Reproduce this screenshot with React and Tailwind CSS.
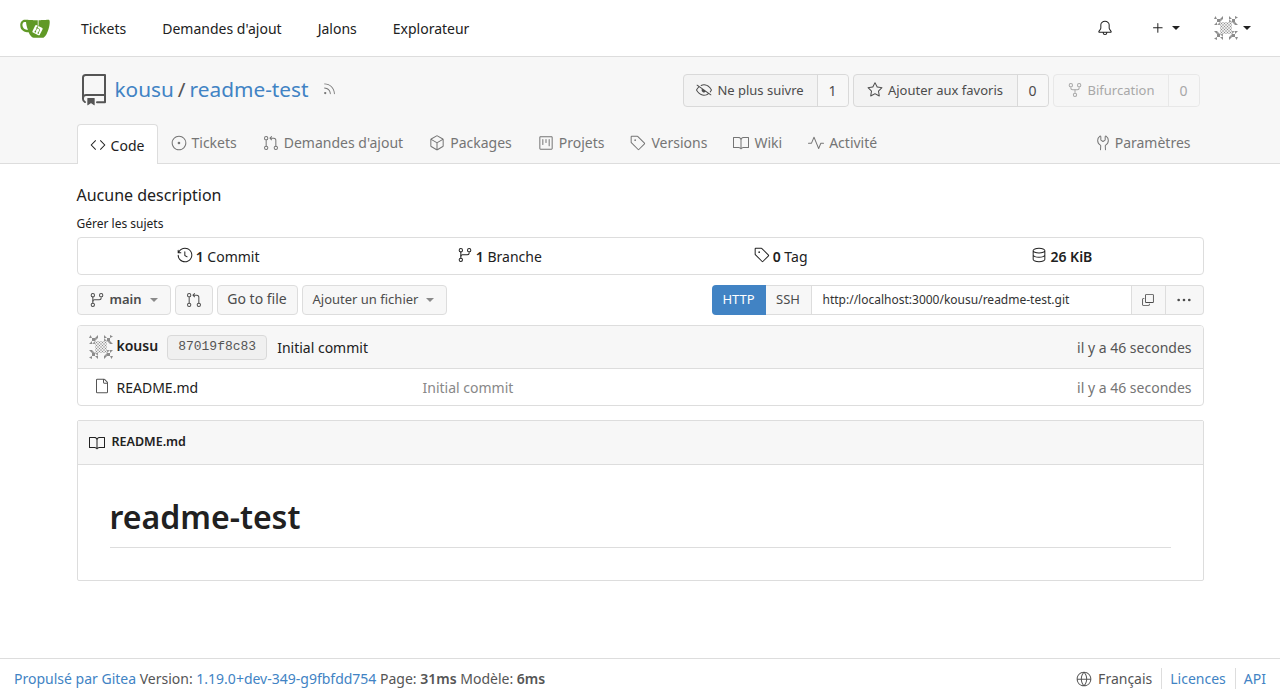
import {
  GoBell, GoBook, GoCode, GoCopy, GoDatabase, GoEyeClosed, GoFile, GoGitBranch, GoGitPullRequest,
  GoGlobe, GoHistory, GoIssueOpened, GoKebabHorizontal, GoPackage, GoPlus, GoProject, GoPulse,
  GoRepo, GoRepoForked, GoRss, GoStar, GoTag, GoTools,
} from 'react-icons/go'

const FONT = "font-['Noto_Sans',sans-serif]"

const NAV_LINKS = ['Tickets', "Demandes d'ajout", 'Jalons', 'Explorateur']

const TABS = [
  { icon: GoIssueOpened, label: 'Tickets' },
  { icon: GoGitPullRequest, label: "Demandes d'ajout" },
  { icon: GoPackage, label: 'Packages' },
  { icon: GoProject, label: 'Projets' },
  { icon: GoTag, label: 'Versions' },
  { icon: GoBook, label: 'Wiki' },
  { icon: GoPulse, label: 'Activité' },
]

function Caret({ className = 'text-[#212121]' }) {
  return (
    <svg width="8" height="4" viewBox="0 0 8 4" className={`fill-current ${className}`}>
      <path d="M0 0h8L4 4z" />
    </svg>
  )
}

function GiteaLogo() {
  return (
    <svg width="30" height="30" viewBox="0 0 640 640">
      <path fill="#fff" d="m395.9 484.2-126.9-61c-12.5-6-17.9-21.2-11.8-33.8l61-126.9c6-12.5 21.2-17.9 33.8-11.8 17.2 8.3 27.1 13 27.1 13l-.1-109.2 16.7-.1.1 117.1s57.4 24.2 83.1 40.1c3.7 2.3 10.2 6.8 12.9 14.4 2.1 6.1 2 13.1-1 19.3l-61 126.9c-6.2 12.7-21.4 18.1-33.9 12" />
      <path fill="#609926" d="M622.7 149.8c-4.1-4.1-9.6-4-9.6-4s-117.2 6.6-177.9 8c-13.3.3-26.5.6-39.6.7v117.2c-5.5-2.6-11.1-5.3-16.6-7.9 0-36.4-.1-109.2-.1-109.2-29 .4-89.2-2.2-89.2-2.2s-141.4-7.1-156.8-8.5c-9.8-.6-22.5-2.1-39 1.5-8.7 1.8-33.5 7.4-53.8 26.9C-4.9 212.4 6.6 276.2 8 285.8c1.7 11.7 6.9 44.2 31.7 72.5 45.8 56.1 144.4 54.8 144.4 54.8s12.1 28.9 30.6 55.5c25 33.1 50.7 58.9 75.7 62 63 0 188.9-.1 188.9-.1s12 .1 28.3-10.3c14-8.5 26.5-23.4 26.5-23.4S547 483 565 451.5c5.5-9.7 10.1-19.1 14.1-28 0 0 55.2-117.1 55.2-231.1-1.1-34.5-9.6-40.6-11.6-42.6M125.6 353.9c-25.9-8.5-36.9-18.7-36.9-18.7S69.6 321.8 60 295.4c-16.5-44.2-1.4-71.2-1.4-71.2s8.4-22.5 38.5-30c13.8-3.7 31-3.1 31-3.1s7.1 59.4 15.7 94.2c7.2 29.2 24.8 77.7 24.8 77.7s-26.1-3.1-43-9.1m300.3 107.6s-6.1 14.5-19.6 15.4c-5.8.4-10.3-1.2-10.3-1.2s-.3-.1-5.3-2.1l-112.9-55s-10.9-5.7-12.8-15.6c-2.2-8.1 2.7-18.1 2.7-18.1L322 273s4.8-9.7 12.2-13c.6-.3 2.3-1 4.5-1.5 8.1-2.1 18 2.8 18 2.8L467.4 315s12.6 5.7 15.3 16.2c1.9 7.4-.5 14-1.8 17.2-6.3 15.4-55 113.1-55 113.1" />
      <path fill="#609926" d="M326.8 380.1c-8.2.1-15.4 5.8-17.3 13.8s2 16.3 9.1 20c7.7 4 17.5 1.8 22.7-5.4 5.1-7.1 4.3-16.9-1.8-23.1l24-49.1c1.5.1 3.7.2 6.2-.5 4.1-.9 7.1-3.6 7.1-3.6 4.2 1.8 8.6 3.8 13.2 6.1 4.8 2.4 9.3 4.9 13.4 7.3.9.5 1.8 1.1 2.8 1.9 1.6 1.3 3.4 3.1 4.7 5.5 1.9 5.5-1.9 14.9-1.9 14.9-2.3 7.6-18.4 40.6-18.4 40.6-8.1-.2-15.3 5-17.7 12.5-2.6 8.1 1.1 17.3 8.9 21.3s17.4 1.7 22.5-5.3c5-6.8 4.6-16.3-1.1-22.6 1.9-3.7 3.7-7.4 5.6-11.3 5-10.4 13.5-30.4 13.5-30.4.9-1.7 5.7-10.3 2.7-21.3-2.5-11.4-12.6-16.7-12.6-16.7-12.2-7.9-29.2-15.2-29.2-15.2s0-4.1-1.1-7.1c-1.1-3.1-2.8-5.1-3.9-6.3 4.7-9.7 9.4-19.3 14.1-29-4.1-2-8.1-4-12.2-6.1-4.8 9.8-9.7 19.7-14.5 29.5-6.7-.1-12.9 3.5-16.1 9.4-3.4 6.3-2.7 14.1 1.9 19.8z" />
    </svg>
  )
}

// identicon: 4x4 blocks, drawn once per quadrant
function Avatar({ size = 24 }) {
  const quadrant = (
    <g>
      <path d="M0 6 3 0l3 6zM6 6h6v6H6zM12 6l6-6v6zM6 12v6H0z" />
      <path d="M12 6h6l-6 6zM6 18h6v-6z" opacity="0.85" />
      <path fill="#eee" d="M12 12h12v12H12z" />
      <path stroke="#8c8c8c" strokeWidth="1.6" fill="none" d="M13 13l4 4m0-4l-4 4M19 13l4 4m0-4l-4 4M13 19l4 4m0-4l-4 4M19 19l4 4m0-4l-4 4" />
    </g>
  )
  return (
    <svg width={size} height={size} viewBox="0 0 48 48" className="fill-[#8c8c8c] shrink-0">
      {quadrant}
      <g transform="rotate(90 24 24)">{quadrant}</g>
      <g transform="rotate(180 24 24)">{quadrant}</g>
      <g transform="rotate(270 24 24)">{quadrant}</g>
    </svg>
  )
}

function CountButton({ icon: Icon, label, count, width, disabled }) {
  return (
    <div className={`flex h-[33px] rounded-[4px] border bg-[#f3f3f3] text-[13px] ${width} ${disabled ? 'border-[#e8e8e8] bg-[#f6f6f6] text-[#a8a8a8]' : 'border-[#d9d9d9] text-[#4c4c4c]'}`}>
      <div className={`flex flex-1 items-center justify-center gap-[5px] border-r ${disabled ? 'border-[#e8e8e8]' : 'border-[#d9d9d9]'}`}>
        <Icon size={16} />
        <span className="pt-[2px]">{label}</span>
      </div>
      <div className="flex w-[30px] items-center justify-center bg-[#f7f7f7] text-[14px] rounded-r-[4px]">{count}</div>
    </div>
  )
}

function Stat({ icon: Icon, value, label }) {
  return (
    <div className="flex items-center justify-center gap-[3px] text-[14px] text-[#212121]">
      <Icon size={16} className="-mt-[3px]" />
      <span><b className="font-semibold">{value}</b>{label && ` ${label}`}</span>
    </div>
  )
}

export default function App() {
  return (
    <div className={`${FONT} flex min-h-[699px] flex-col bg-white text-[14px] text-[#212121]`}>
      <nav className="flex h-[57px] items-center border-b border-[#dddddd] bg-white">
        <div className="ml-[20px] mr-[13px]"><GiteaLogo /></div>
        {NAV_LINKS.map((link) => (
          <a key={link} className="px-[18px] text-[14px] text-[#212121]">{link}</a>
        ))}
        <div className="ml-auto flex items-center">
          <GoBell size={16} className="mr-[37px]" />
          <GoPlus size={16} className="mr-[6px]" />
          <Caret />
          <div className="ml-[34px] mr-[5px]"><Avatar size={24} /></div>
          <div className="mr-[29px]"><Caret /></div>
        </div>
      </nav>

      <header className="border-b border-[#dddddd] bg-[#f7f7f7]">
        <div className="mx-auto w-[1127px]">
          <div className="flex h-[67px] items-center pb-[1px]">
            <GoRepo size={32} className="ml-[1px] mr-[5px] text-[#555555]" />
            <a className="text-[20.8px] text-[#4183c4]">kousu</a>
            <span className="mx-[4px] text-[20.8px] text-[#555555]">/</span>
            <a className="text-[20.8px] text-[#4183c4]">readme-test</a>
            <GoRss size={14} className="ml-[13px] mb-[3px] text-[#757575]" />
            <div className="ml-auto mr-[4px] flex gap-[4px]">
              <CountButton icon={GoEyeClosed} label="Ne plus suivre" count="1" width="w-[166px]" />
              <CountButton icon={GoStar} label="Ajouter aux favoris" count="0" width="w-[196px]" />
              <CountButton icon={GoRepoForked} label="Bifurcation" count="0" width="w-[147px]" disabled />
            </div>
          </div>
          <div className="flex h-[39px] items-end">
            <div className="-mb-[1px] flex h-[40px] w-[81px] items-center justify-center gap-[5px] rounded-t-[4px] border border-b-0 border-[#dddddd] bg-white pt-[1px] text-[14px]">
              <GoCode size={16} />
              <span>Code</span>
            </div>
            <div className="flex h-[39px] items-center pb-[2px] pl-[13px] text-[#757575]">
              {TABS.map(({ icon: Icon, label }) => (
                <div key={label} className="mr-[26px] flex items-center gap-[5px]">
                  <Icon size={16} />
                  <span>{label}</span>
                </div>
              ))}
            </div>
            <div className="ml-auto mr-[13px] flex h-[39px] items-center gap-[4px] pb-[2px] text-[#757575]">
              <GoTools size={16} />
              <span>Paramètres</span>
            </div>
          </div>
        </div>
      </header>

      <main className="mx-auto w-[1127px]">
        <div className="mt-[19px] text-[16px] leading-[24px]">Aucune description</div>
        <div className="mt-[8px] text-[12px] leading-[17px]">Gérer les sujets</div>

        <div className="mt-[5px] grid h-[38px] grid-cols-4 rounded-[4px] border border-[#dddddd]">
          <Stat icon={GoHistory} value="1" label="Commit" />
          <Stat icon={GoGitBranch} value="1" label="Branche" />
          <Stat icon={GoTag} value="0" label="Tag" />
          <Stat icon={GoDatabase} value="26 KiB" />
        </div>

        <div className="mt-[10px] flex h-[30px] gap-[4px] text-[13px] text-[#4c4c4c]">
          <div className="flex w-[94px] items-center rounded-[4px] border border-[#dddddd] bg-[#f7f7f7] pl-[11px]">
            <GoGitBranch size={16} className="mr-[5px]" />
            <b className="font-semibold">main</b>
            <Caret className="ml-[8px] text-[#8a8a8a]" />
          </div>
          <div className="flex w-[38px] items-center justify-center rounded-[4px] border border-[#dddddd] bg-[#f7f7f7]">
            <GoGitPullRequest size={16} />
          </div>
          <div className="flex w-[81px] items-center justify-center rounded-[4px] border border-[#dddddd] bg-[#f7f7f7] pb-[3px] text-[14px]">Go to file</div>
          <div className="flex w-[145px] items-center gap-[8px] rounded-[4px] border border-[#dddddd] bg-[#f7f7f7] pl-[10px]">
            <span>Ajouter un fichier</span>
            <Caret className="text-[#8a8a8a]" />
          </div>

          <div className="ml-auto flex">
            <div className="flex w-[54px] items-center justify-center rounded-l-[4px] bg-[#4183c4] text-white">HTTP</div>
            <div className="flex w-[45px] items-center justify-center border-y border-[#dddddd] bg-[#f7f7f7]">SSH</div>
            <div className="flex w-[320px] items-center border-y border-l border-[#dddddd] bg-white pl-[11px] pb-[1px] text-[12px] text-[#333333]">http://localhost:3000/kousu/readme-test.git</div>
            <div className="flex w-[35px] items-center justify-center border border-[#dddddd] bg-[#f7f7f7]">
              <GoCopy size={14} />
            </div>
            <div className="flex w-[38px] items-center justify-center rounded-r-[4px] border-y border-r border-[#dddddd] bg-[#f7f7f7]">
              <GoKebabHorizontal size={16} />
            </div>
          </div>
        </div>

        <div className="mt-[10px] overflow-hidden rounded-[4px] border border-[#dddddd]">
          <div className="flex h-[43px] items-center border-b border-[#dddddd] bg-[#f7f7f7] pl-[11px] pr-[11px]">
            <Avatar size={24} />
            <b className="ml-[4px] pb-[3px] font-semibold">kousu</b>
            <span className="ml-[9px] flex h-[25px] w-[100px] items-center justify-center rounded-[4px] border border-[#d9d9d9] bg-[#f0f0f0] font-['Liberation_Mono',monospace] text-[13px] text-[#555555]">87019f8c83</span>
            <span className="ml-[10px]">Initial commit</span>
            <span className="ml-auto text-[#555555]">il y a 46 secondes</span>
          </div>
          <div className="flex h-[36px] items-center pl-[16px] pr-[11px]">
            <GoFile size={16} className="mb-[3px] text-[#555555]" />
            <span className="ml-[7px] w-[306px]">README.md</span>
            <span className="text-[#888888]">Initial commit</span>
            <span className="ml-auto text-[#757575]">il y a 46 secondes</span>
          </div>
        </div>

        <div className="mt-[14px] rounded-[2px] border border-[#dddddd]">
          <div className="flex h-[44px] items-center gap-[7px] border-b border-[#dddddd] bg-[#f7f7f7] pl-[11px]">
            <GoBook size={16} />
            <b className="text-[12.5px] font-semibold">README.md</b>
          </div>
          <div className="px-[32px] pt-[32px] pb-[32px]">
            <h1 className="border-b border-[#dddddd] pb-[10px] text-[32px] font-semibold leading-[40px] text-[#212121]">readme-test</h1>
          </div>
        </div>
      </main>

      <footer className="mt-auto flex h-[41px] items-center border-t border-[#dddddd] bg-white px-[14px] pb-[1px] text-[14px] text-[#555555]">
        <div>
          <a className="text-[#4183c4]">Propulsé par Gitea</a> Version: <a className="text-[#4183c4]">1.19.0+dev-349-g9fbfdd754</a> Page: <b className="font-semibold">31ms</b> Modèle: <b className="font-semibold">6ms</b>
        </div>
        <div className="ml-auto flex items-center">
          <GoGlobe size={16} className="mr-[6px]" />
          <span>Français</span>
          <a className="ml-[9px] border-l border-[#dddddd] pl-[8px] text-[#4183c4]">Licences</a>
          <a className="ml-[9px] border-l border-[#dddddd] pl-[8px] text-[#4183c4]">API</a>
        </div>
      </footer>
    </div>
  )
}
